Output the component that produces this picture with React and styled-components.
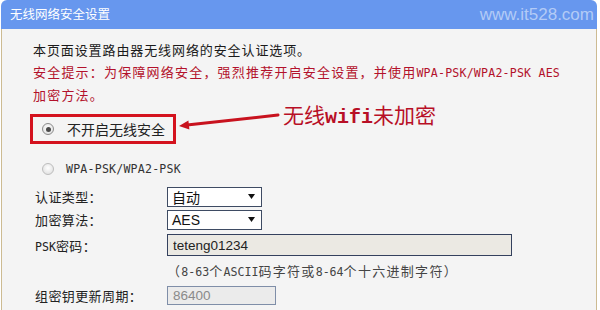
import React from "react";
import styled, { createGlobalStyle } from "styled-components";

const GlobalStyle = createGlobalStyle`
  html, body { margin: 0; padding: 0; background: #ffffff; }
  body {
    width: 600px;
    height: 310px;
    overflow: hidden;
    font-family: "Noto Sans CJK SC", sans-serif;
  }
`;

const Frame = styled.div`
  width: 596px;
  height: 310px;
  margin-left: 1px;
  display: flex;
  flex-direction: column;
`;

const Header = styled.div`
  flex-shrink: 0;
  height: 29px;
  box-sizing: border-box;
  background: #6797ee;
  border-radius: 6px 6px 0 0;
  display: flex;
  align-items: center;
  justify-content: space-between;
  padding: 0 3px 0 9px;
`;

const Title = styled.h1`
  margin: 0;
  font: 400 12.5px/1 "Noto Sans CJK SC", sans-serif;
  color: #ffffff;
`;

const Watermark = styled.span`
  font: 400 17px/1 "Liberation Sans", sans-serif;
  color: #b3cbf6;
`;

const Body = styled.div`
  flex: 1;
  background: #f4f4f4;
  border-left: 1px solid #cdbb92;
  border-right: 1px solid #cdbb92;
  padding: 10px 0 0 31px;
`;

const Intro = styled.p`
  margin: 0;
  font-size: 13px;
  letter-spacing: ${(p) => (p.$warn ? "1.2px" : "0.9px")};
  line-height: 22px;
  white-space: nowrap;
  color: ${(p) => (p.$warn ? "#b3112b" : "#1a1a1a")};
`;

const Latin = styled.span`
  font-family: "DejaVu Sans Mono", monospace;
  font-size: 11.6px;
  letter-spacing: ${(p) => p.$ls || "0"};
`;

const OptionRow = styled.div`
  display: flex;
  align-items: flex-start;
  margin-top: 8px;
`;

const Boxed = styled.label`
  display: flex;
  align-items: center;
  gap: 13px;
  height: 30px;
  box-sizing: border-box;
  border: 3px solid #d4121e;
  padding: 0 8px 0 9px;
  margin-left: -3px;
  font-size: 14px;
  color: #222;
`;

const Radio = styled.span`
  flex-shrink: 0;
  width: 12px;
  height: 12px;
  box-sizing: border-box;
  border-radius: 50%;
  border: 1px solid ${(p) => (p.$checked ? "#8c8c8c" : "#bdbdbd")};
  background: radial-gradient(circle at 50% 40%, #ffffff, #dadada);
  display: flex;
  align-items: center;
  justify-content: center;
  &::after {
    content: "";
    width: 5px;
    height: 5px;
    border-radius: 50%;
    background: #4a4a4a;
    display: ${(p) => (p.$checked ? "block" : "none")};
  }
`;

const ArrowSvg = styled.svg`
  flex-shrink: 0;
  margin: -5px 0 0 2px;
`;

const Annotation = styled.span`
  margin: -13px 0 0 3px;
  font-size: 21px;
  line-height: 26px;
  color: #b80f26;
  white-space: nowrap;
`;

const AnnoLatin = styled.span`
  font-family: "Liberation Mono", monospace;
  font-weight: 700;
  font-size: 20px;
`;

const PlainOption = styled.label`
  display: flex;
  align-items: center;
  gap: 12px;
  height: 22px;
  margin-top: 14px;
  padding-left: 9px;
  color: #333;
`;

const Form = styled.div`
  display: grid;
  grid-template-columns: 132px auto;
  grid-template-rows: 23px 23px 28px 24px 24px;
  align-items: center;
  margin-top: 5px;
  padding-left: 2px;
`;

const FieldLabel = styled.span`
  font-size: 13px;
  letter-spacing: 0.4px;
  color: #222;
  white-space: nowrap;
`;

const Select = styled.div`
  width: 95px;
  height: 20px;
  box-sizing: border-box;
  border: 1px solid #3e4b63;
  background: #ffffff;
  display: flex;
  align-items: center;
  justify-content: space-between;
  padding: 0 6px 0 4px;
  font-size: 14px;
  color: #111;
`;

const SelectText = styled.span`
  font-family: ${(p) => (p.$latin ? '"Liberation Sans", sans-serif' : '"Noto Sans CJK SC", sans-serif')};
  font-size: 14px;
`;

const TextInput = styled.input`
  width: ${(p) => p.$w}px;
  height: ${(p) => p.$h}px;
  box-sizing: border-box;
  border: 1px solid ${(p) => (p.$disabled ? "#7f8ea8" : "#34415e")};
  background: ${(p) => (p.$disabled ? "#ebebeb" : "#ebe9e3")};
  color: ${(p) => (p.$disabled ? "#8a8a8a" : "#222")};
  font: 400 13.5px "Liberation Sans", sans-serif;
  padding: 0 0 0 5px;
  margin: 0;
  outline: none;
`;

const Hint = styled.span`
  grid-column: 2;
  font-size: 13px;
  letter-spacing: 1.3px;
  color: #444;
  white-space: nowrap;
  margin-top: -2px;
`;

const Caret = () => (
  <svg width="7" height="5" viewBox="0 0 7 5">
    <polygon points="0,0 7,0 3.5,5" fill="#111" />
  </svg>
);

export default function App() {
  return (
    <>
      <GlobalStyle />
      <Frame>
        <Header>
          <Title>无线网络安全设置</Title>
          <Watermark>www.it528.com</Watermark>
        </Header>
        <Body>
          <Intro>本页面设置路由器无线网络的安全认证选项。</Intro>
          <Intro $warn>
            安全提示：为保障网络安全，强烈推荐开启安全设置，并使用<Latin $ls="0.2px">WPA-PSK/WPA2-PSK AES</Latin>
            <br />
            加密方法。
          </Intro>
          <OptionRow>
            <Boxed>
              <Radio $checked />
              不开启无线安全
            </Boxed>
            <ArrowSvg width="102" height="22" viewBox="0 0 102 22">
              <line x1="9" y1="16.1" x2="100" y2="6" stroke="#c8121e" strokeWidth="3" strokeLinecap="round" />
              <polygon points="1,17 11.4,20.6 10.4,11.4" fill="#c8121e" />
            </ArrowSvg>
            <Annotation>
              无线<AnnoLatin>wifi</AnnoLatin>未加密
            </Annotation>
          </OptionRow>
          <PlainOption>
            <Radio />
            <Latin $ls="0.2px">WPA-PSK/WPA2-PSK</Latin>
          </PlainOption>
          <Form>
            <FieldLabel>认证类型：</FieldLabel>
            <Select>
              <SelectText>自动</SelectText>
              <Caret />
            </Select>
            <FieldLabel>加密算法：</FieldLabel>
            <Select>
              <SelectText $latin>AES</SelectText>
              <Caret />
            </Select>
            <FieldLabel>
              <Latin>PSK</Latin>密码：
            </FieldLabel>
            <TextInput $w={345} $h={22} readOnly defaultValue="teteng01234" />
            <Hint>
              （<Latin>8-63</Latin>个<Latin>ASCII</Latin>码字符或<Latin>8-64</Latin>个十六进制字符）
            </Hint>
            <FieldLabel>组密钥更新周期：</FieldLabel>
            <TextInput $w={109} $h={19} $disabled readOnly defaultValue="86400" />
          </Form>
        </Body>
      </Frame>
    </>
  );
}
